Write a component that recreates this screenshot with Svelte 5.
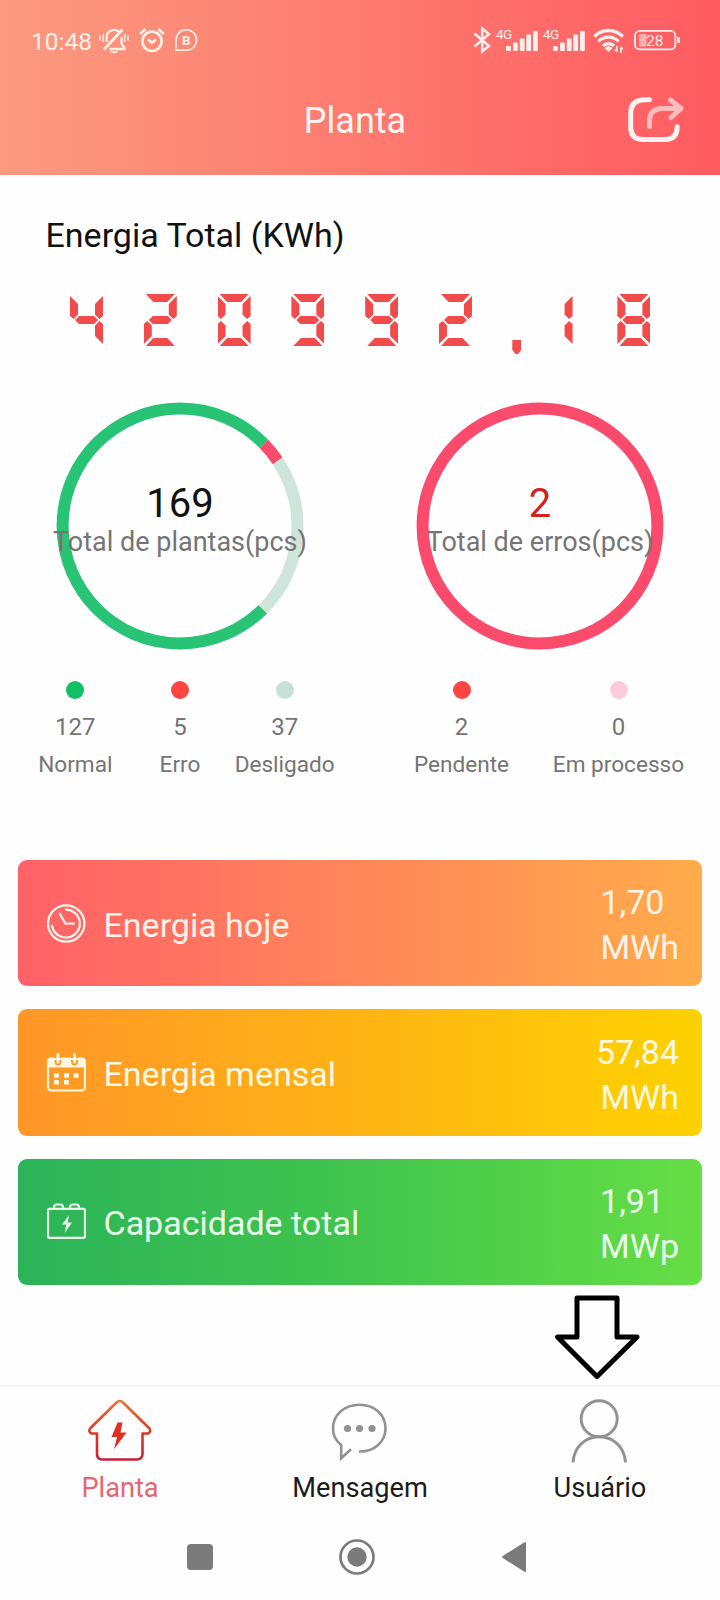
<script lang="ts">
  interface Slice {
    label: string;
    value: number;
    dot: string;
    stroke: string;
  }

  interface Ring {
    id: string;
    caption: string;
    total: number;
    totalColor: string;
    slices: Slice[];
  }

  const total = "420992,18";

  // segments: a top, b top right, c bottom right, d bottom, e bottom left, f top left, g middle
  const segments: Record<string, string> = {
    "0": "abcdef",
    "1": "bc",
    "2": "abged",
    "3": "abgcd",
    "4": "fgbc",
    "5": "afgcd",
    "6": "afgedc",
    "7": "abc",
    "8": "abcdefg",
    "9": "abfgcd",
  };

  const rings: Ring[] = [
    {
      id: "plants",
      caption: "Total de plantas(pcs)",
      total: 169,
      totalColor: "#111111",
      slices: [
        { label: "Normal", value: 127, dot: "#12bf64", stroke: "#28c374" },
        { label: "Erro", value: 5, dot: "#fd4643", stroke: "#fb4b6c" },
        { label: "Desligado", value: 37, dot: "#c8e1d6", stroke: "#cde5da" },
      ],
    },
    {
      id: "errors",
      caption: "Total de erros(pcs)",
      total: 2,
      totalColor: "#d4201f",
      slices: [
        { label: "Pendente", value: 2, dot: "#fd4643", stroke: "#fb4b6c" },
        { label: "Em processo", value: 0, dot: "#fbccd8", stroke: "#fbccd8" },
      ],
    },
  ];

  function arcs(ring: Ring) {
    let offset = 0;
    return ring.slices
      .filter((s) => s.value > 0)
      .map((s) => {
        const length = (s.value / ring.total) * 100;
        const arc = { color: s.stroke, length, offset: -offset };
        offset += length;
        return arc;
      });
  }

  const cards = [
    { id: "today", label: "Energia hoje", amount: "1,70", unit: "MWh" },
    { id: "month", label: "Energia mensal", amount: "57,84", unit: "MWh" },
    { id: "capacity", label: "Capacidade total", amount: "1,91", unit: "MWp" },
  ];

  const tabs = [
    { id: "plant", label: "Planta" },
    { id: "message", label: "Mensagem" },
    { id: "user", label: "Usuário" },
  ];

  let activeTab = $state("plant");
</script>

{#snippet signal()}
  <span class="network">4G</span>
  <svg class="bars" width="32" height="30" viewBox="507 26 32 30" fill="#fff0ed">
    <rect x="507" y="46" width="4.8" height="5" rx="1" />
    <rect x="514" y="42.500" width="4.800" height="8.500" rx="1" />
    <rect x="520.800" y="38.500" width="4.800" height="12.500" rx="1" />
    <rect x="527.300" y="34.500" width="4.800" height="16.500" rx="1" />
    <rect x="534" y="31" width="4.800" height="20" rx="1" />
  </svg>
{/snippet}

<div class="screen">
  <header>
    <div class="status">
      <span class="time">10:48</span>
      <svg class="bell" width="32" height="30" viewBox="98 26 32 30" fill="none" stroke="#fff0e8" stroke-width="2">
        <path d="M106.500 42v-4.500a7.600 7.600 0 0 1 13-5.300M121.500 37v6.500l3 4.500v1h-15" stroke-width="2.300" />
        <path d="M122.500 29.500 104 49.500" stroke-width="2.800" />
        <path d="M110.500 51.300q3.500 2 7 0" />
        <path d="M100 35.500v5M103.300 34v8M124.700 34v8M128 35.500v5" stroke-width="1.500" />
      </svg>
      <svg class="alarm" width="28" height="30" viewBox="138 26 28 30" fill="none" stroke="#fff0e8" stroke-width="2.700">
        <circle cx="152" cy="41.300" r="9.700" />
        <path d="m148 39.500 4 3.200 4-3.200" />
        <path d="m140 34 5.500-5M164 34l-5.500-5" />
      </svg>
      <svg width="24" height="30" viewBox="174 26 24 30" fill="none" stroke="#fff0e8" stroke-width="1.600">
        <path d="M176 50.300V40a10.300 10.300 0 1 1 10.300 10.300z" stroke-linejoin="round" />
        <text x="186.300" y="45" text-anchor="middle" font-size="13.500" font-weight="700" fill="#fff0e8" stroke="none">B</text>
      </svg>
      <span class="spacer"></span>
      <svg width="18" height="30" viewBox="474 26 18 30" fill="none" stroke="#fff0ed" stroke-width="2.500">
        <path d="m475.500 33.500 14.500 12.500-6.800 5.500v-23L490 34l-14.500 12.500" />
      </svg>
      {@render signal()}
      {@render signal()}
      <svg class="wifi" width="32" height="30" viewBox="593 26 32 30" fill="none" stroke="#fff0ed" stroke-width="3.300">
        <path d="M594.300 36.500a20 20 0 0 1 28.600 0M598.500 41.300a14 14 0 0 1 20 0M603 45.800a8 8 0 0 1 11 0" />
        <path d="m604.500 48 4 4 4-4a5.500 5.500 0 0 0-8 0z" fill="#fff0ed" stroke="none" />
        <path d="M616.800 46v6M614.800 49.500l2 2.300M620.800 53v-6M622.800 49.300l-2-2.300" stroke-width="1.500" />
      </svg>
      <svg width="48" height="30" viewBox="633 26 48 30">
        <rect x="639" y="34" width="7.500" height="12.500" rx="1" fill="#ffb0b2" />
        <rect x="634.900" y="30.900" width="40.500" height="18.500" rx="5" fill="none" stroke="#fff0ed" stroke-width="1.800" />
        <rect x="677.300" y="37" width="2.500" height="6" fill="#fff0ed" />
        <text x="654.800" y="46" text-anchor="middle" font-size="15.500" fill="#fff0ed">28</text>
      </svg>
    </div>
    <div class="titlebar">
      <h1>Planta</h1>
      <svg width="58" height="48" viewBox="627.500 95 58 48" fill="none" stroke-width="5" stroke-linecap="round">
        <path d="M650 98.700h-4.500q-14.300 0-14.300 13.800v13.500q0 12.500 12.500 12.500h21.500q12.500 0 12.500-12.800" stroke="#fff3f1" />
        <path d="M650 125.500v-5q0-13 13-13h18M671 99l10.500 8.500L671.500 116.500" stroke="#ffbdbc" stroke-linejoin="round" />
      </svg>
    </div>
  </header>

  <main>
    <h2>Energia Total (KWh)</h2>
    <div class="meter" role="img" aria-label={total}>
      {#each total.split("") as char}
        {#if char === ","}
          <span class="comma"></span>
        {:else}
          <span class="digit" class:one={char === "1"}>
            {#each segments[char].split("") as seg (seg)}
              <i class="seg {seg}"></i>
            {/each}
          </span>
        {/if}
      {/each}
    </div>

    <div class="rings">
      {#each rings as ring (ring.id)}
        <section class="ring-panel">
          <div class="ring">
            <svg width="248" height="248" viewBox="0 0 248 248" fill="none">
              {#each arcs(ring) as arc}
                <circle
                  cx="124"
                  cy="124"
                  r="117.400"
                  pathLength="100"
                  stroke={arc.color}
                  stroke-width="12"
                  stroke-dasharray="{arc.length} {100 - arc.length}"
                  stroke-dashoffset={arc.offset}
                  transform="rotate(45.100 124 124)"
                />
              {/each}
            </svg>
            <div class="ring-text">
              <strong style="color: {ring.totalColor}">{ring.total}</strong>
              <span>{ring.caption}</span>
            </div>
          </div>
          <ul class="legend">
            {#each ring.slices as slice (slice.label)}
              <li>
                <span class="dot" style="background: {slice.dot}"></span>
                <span>{slice.value}</span>
                <span class="name">{slice.label}</span>
              </li>
            {/each}
          </ul>
        </section>
      {/each}
    </div>

    <div class="cards">
      {#each cards as card (card.id)}
        <section class="card {card.id}">
          <svg width="39" height="39" viewBox="0 0 39 39" fill="none" stroke="currentColor" stroke-width="2.200">
            {#if card.id === "today"}
              <circle cx="19.200" cy="19.500" r="18.200" />
              <path d="M18 5.600A14 14 0 1 1 5.200 22.500l-.6-1.500" />
              <path d="m12.300 9 6 10.300 9.500.3" />
            {:else if card.id === "month"}
              <rect x="1" y="6" width="37" height="31.500" rx="3.500" />
              <path d="M0 14.500V9q0-4.500 4-4.500h3.500V8q0 4.500 3.500 4.500T14.500 8V4.500H24V8q0 4.500 3.500 4.500T31 8V4.500h4q4 0 4 4.500v5.500z" fill="currentColor" stroke="none" />
              <path d="M11 1.500V9M27.500 1.500V9" stroke-width="3" stroke-linecap="round" />
              <path d="M7 22.500h5M17 22.500h5M26.500 22.500h5M7 29.200h5M17 29.200h5" stroke-width="4.600" />
            {:else}
              <rect x="1" y="6.800" width="37" height="29" rx="1.500" />
              <path d="M7 6.500V5.200q0-2.700 2.700-2.700h3.600q2.700 0 2.700 2.700v1.300M23 6.500V5.200q0-2.700 2.700-2.700h3.600q2.700 0 2.700 2.700v1.300" />
              <path d="m22 13-7 9.500h4.200l-1.500 8.500 7.300-10.500h-4.300z" fill="currentColor" stroke="none" />
            {/if}
          </svg>
          <span class="card-label">{card.label}</span>
          <div class="reading">
            <div>{card.amount}</div>
            <div>{card.unit}</div>
          </div>
        </section>
      {/each}
    </div>

    <svg class="arrow" width="88" height="88" viewBox="0 0 88 88" fill="none" stroke="#000" stroke-width="5">
      <path d="M24 3h40v39h20L44 81.500 4.500 42H24z" stroke-linejoin="round" />
    </svg>
  </main>

  <nav class="tabs">
    {#each tabs as tab (tab.id)}
      <button class:active={activeTab === tab.id} onclick={() => (activeTab = tab.id)}>
        <svg width="72" height="70" viewBox="0 0 72 70" fill="none" stroke="#929292" stroke-width="2.600">
          {#if tab.id === "plant"}
            <defs>
              <linearGradient id="house" x1="0" y1="5" x2="0" y2="64" gradientUnits="userSpaceOnUse">
                <stop offset="0" stop-color="#ee7038" />
                <stop offset=".5" stop-color="#dc3a25" />
                <stop offset="1" stop-color="#c32137" />
              </linearGradient>
            </defs>
            <path
              d="m32.500 6.500-26 25.500q-3 3.500 1 5.500h5.500V58q0 5.500 5.500 5.500h34Q58.500 63.500 58.500 58V37.500H64q4-2 1-5.500l-26-25.500q-3.200-3-6.500 0z"
              stroke="url(#house)"
              stroke-linejoin="round"
            />
            <path d="M33.500 26.500h5l-2 10h6l-12.500 16.800 3-12.300h-5.500z" fill="#df3121" stroke="none" />
          {:else if tab.id === "message"}
            <path d="M35 55.500C50 56 61.500 46 61.500 32.500 61.500 18 50 8.800 35.500 8.800S9 18 9 32.500c0 7 3 12.500 8.200 16.500v13.300l9.800-9" />
            <g fill="#929292" stroke="none">
              <circle cx="23.500" cy="32.500" r="3.600" />
              <circle cx="35.500" cy="32.500" r="3.600" />
              <circle cx="48" cy="32.500" r="3.600" />
            </g>
          {:else}
            <circle cx="35.200" cy="22.800" r="18" stroke-width="2.900" />
            <path d="M9 66.500C10 51 21 40.800 35.200 40.800S60.500 51 61.500 66.500" stroke-width="2.900" />
          {/if}
        </svg>
        <span>{tab.label}</span>
      </button>
    {/each}
  </nav>

  <footer class="system">
    <svg width="26" height="36" viewBox="0 0 26 36" fill="#7b7b7b"><rect y="5" width="26" height="26" rx="4" /></svg>
    <svg width="36" height="36" viewBox="0 0 36 36" fill="#7b7b7b">
      <circle cx="18" cy="18" r="16.500" fill="none" stroke="#7b7b7b" stroke-width="2.700" />
      <circle cx="18" cy="18" r="9.700" />
    </svg>
    <svg width="26" height="36" viewBox="0 0 26 36" fill="#7b7b7b" stroke="#7b7b7b" stroke-width="2" stroke-linejoin="round">
      <path d="M24 4v28L2 18z" />
    </svg>
  </footer>
</div>

<style>
  :global(body) {
    background: #fefefe;
  }
  .screen {
    display: flex;
    flex-direction: column;
    width: 720px;
    height: 1600px;
    overflow: hidden;
    background: #fefefe;
    font-family: Roboto, sans-serif;
    color: #111;
  }
  svg {
    display: block;
    flex: none;
  }
  h1,
  h2 {
    margin: 0;
    font-weight: 400;
  }
  header {
    height: 175px;
    background: linear-gradient(90deg, #fb9a80, #fd7c70 48%, #ff5b61);
  }
  .status {
    display: flex;
    height: 30px;
    padding: 26px 39px 0 31px;
    color: #fff0e8;
  }
  .time {
    width: 67px;
    font-size: 24.5px;
    line-height: 32px;
    white-space: nowrap;
  }
  .alarm {
    margin: 0 8px;
  }
  .spacer {
    flex: 1;
  }
  .network {
    width: 15px;
    font-size: 13.5px;
    line-height: 15px;
    margin: 1px 0 0 5px;
    color: #fff0ed;
    letter-spacing: -0.5px;
  }
  .bars {
    margin-left: -5px;
  }
  .wifi {
    margin: 0 8px 0 8px;
  }
  .titlebar {
    display: grid;
    grid-template-columns: 1fr auto 1fr;
    align-items: center;
    height: 48px;
    padding: 0 35px 0 25px;
    margin-top: 39px;
    color: #fff6f2;
  }
  h1 {
    grid-column: 2;
    font-size: 36px;
    line-height: 48px;
    padding-top: 2px;
  }
  .titlebar svg {
    justify-self: end;
  }
  main {
    height: 1210px;
  }
  h2 {
    margin: 38px 0 0 45.5px;
    font-size: 34px;
    line-height: 44px;
  }
  .meter {
    display: flex;
    gap: 40.8px;
    height: 52px;
    margin: 37px 0 0 70px;
  }
  .digit {
    display: grid;
    width: 33px;
    height: 52px;
  }
  .digit.one {
    width: 10px;
    margin-right: 4px;
    justify-content: end;
    grid-template-columns: 33px;
  }
  .seg {
    grid-area: 1 / 1;
    background: #f14b4b;
  }
  .a {
    clip-path: polygon(2px 0, 31px 0, 23.5px 8px, 9.5px 8px);
  }
  .b {
    clip-path: polygon(33px 2px, 33px 22px, 29.5px 25px, 25px 20.5px, 25px 10px);
  }
  .c {
    clip-path: polygon(29.5px 27px, 33px 30px, 33px 50px, 25px 42px, 25px 31.5px);
  }
  .d {
    clip-path: polygon(9.5px 44px, 23.5px 44px, 31px 52px, 2px 52px);
  }
  .e {
    clip-path: polygon(3.5px 27px, 8px 31.5px, 8px 42px, 0 50px, 0 30px);
  }
  .f {
    clip-path: polygon(0 2px, 8px 10px, 8px 20.5px, 3.5px 25px, 0 22px);
  }
  .g {
    clip-path: polygon(9px 22px, 24px 22px, 28px 26px, 24px 30px, 9px 30px, 5px 26px);
  }
  .comma {
    width: 9px;
    height: 14px;
    margin: 46px 0.5px 0 -0.5px;
    background: #f14b4b;
    clip-path: polygon(0 0, 100% 0, 100% 70%, 65% 100%, 35% 100%, 0 70%);
  }
  .rings {
    display: grid;
    grid-template-columns: 1fr 1fr;
    margin-top: 55.5px;
  }
  .ring-panel {
    display: flex;
    flex-direction: column;
    align-items: center;
  }
  .ring {
    display: grid;
    justify-items: center;
  }
  .ring > * {
    grid-area: 1 / 1;
  }
  .ring-text {
    display: flex;
    flex-direction: column;
    align-items: center;
    padding-top: 78.5px;
    white-space: nowrap;
    color: #757575;
  }
  .ring-text strong {
    font-size: 40px;
    font-weight: 400;
    line-height: 48px;
  }
  .ring-text span {
    font-size: 27px;
    line-height: 32px;
    margin-top: -2px;
  }
  .legend {
    display: flex;
    width: 314px;
    margin: 31.5px 0 0;
    padding: 0;
    list-style: none;
  }
  .legend li {
    display: flex;
    flex: 1 0 0;
    flex-direction: column;
    align-items: center;
    font-size: 24px;
    line-height: 38px;
    color: #757575;
    white-space: nowrap;
  }
  .legend .name {
    font-size: 22.6px;
  }
  .dot {
    width: 18px;
    height: 18px;
    margin-bottom: 9px;
    border-radius: 50%;
  }
  .cards {
    display: flex;
    flex-direction: column;
    gap: 23px;
    margin: 76px 18px 0;
  }
  .card {
    display: flex;
    align-items: center;
    box-sizing: border-box;
    height: 126.4px;
    padding: 0 23px 0 29px;
    border-radius: 9px;
    font-size: 34px;
    color: #fff3ea;
  }
  .today {
    background: linear-gradient(90deg, #ff6168, #ffac4b);
  }
  .month {
    background: linear-gradient(90deg, #ff9628, #fdd200);
    color: #fff8e0;
  }
  .capacity {
    background: linear-gradient(90deg, #2bb359, #41c54d 50%, #66de45);
    color: #eafdeb;
  }
  .card-label {
    flex: 1;
    margin-left: 17.5px;
    padding-top: 3px;
  }
  .reading {
    line-height: 45px;
    padding-top: 4px;
  }
  .month .reading {
    text-align: right;
  }
  .arrow {
    margin: 10px 0 0 553px;
  }
  .tabs {
    display: grid;
    grid-template-columns: repeat(3, 1fr);
    height: 131px;
    box-sizing: border-box;
    border-top: 2px solid #f4f4f4;
  }
  .tabs button {
    display: flex;
    flex-direction: column;
    align-items: center;
    padding: 9px 0 0;
    border: none;
    background: none;
    font-family: inherit;
    font-size: 27.2px;
    line-height: 36px;
    color: #1c1c1c;
    cursor: pointer;
  }
  .tabs span {
    margin-top: 4px;
  }
  .tabs .active {
    color: #e46670;
  }
  .system {
    display: flex;
    justify-content: space-between;
    padding: 23px 193px 0 187px;
  }
</style>
